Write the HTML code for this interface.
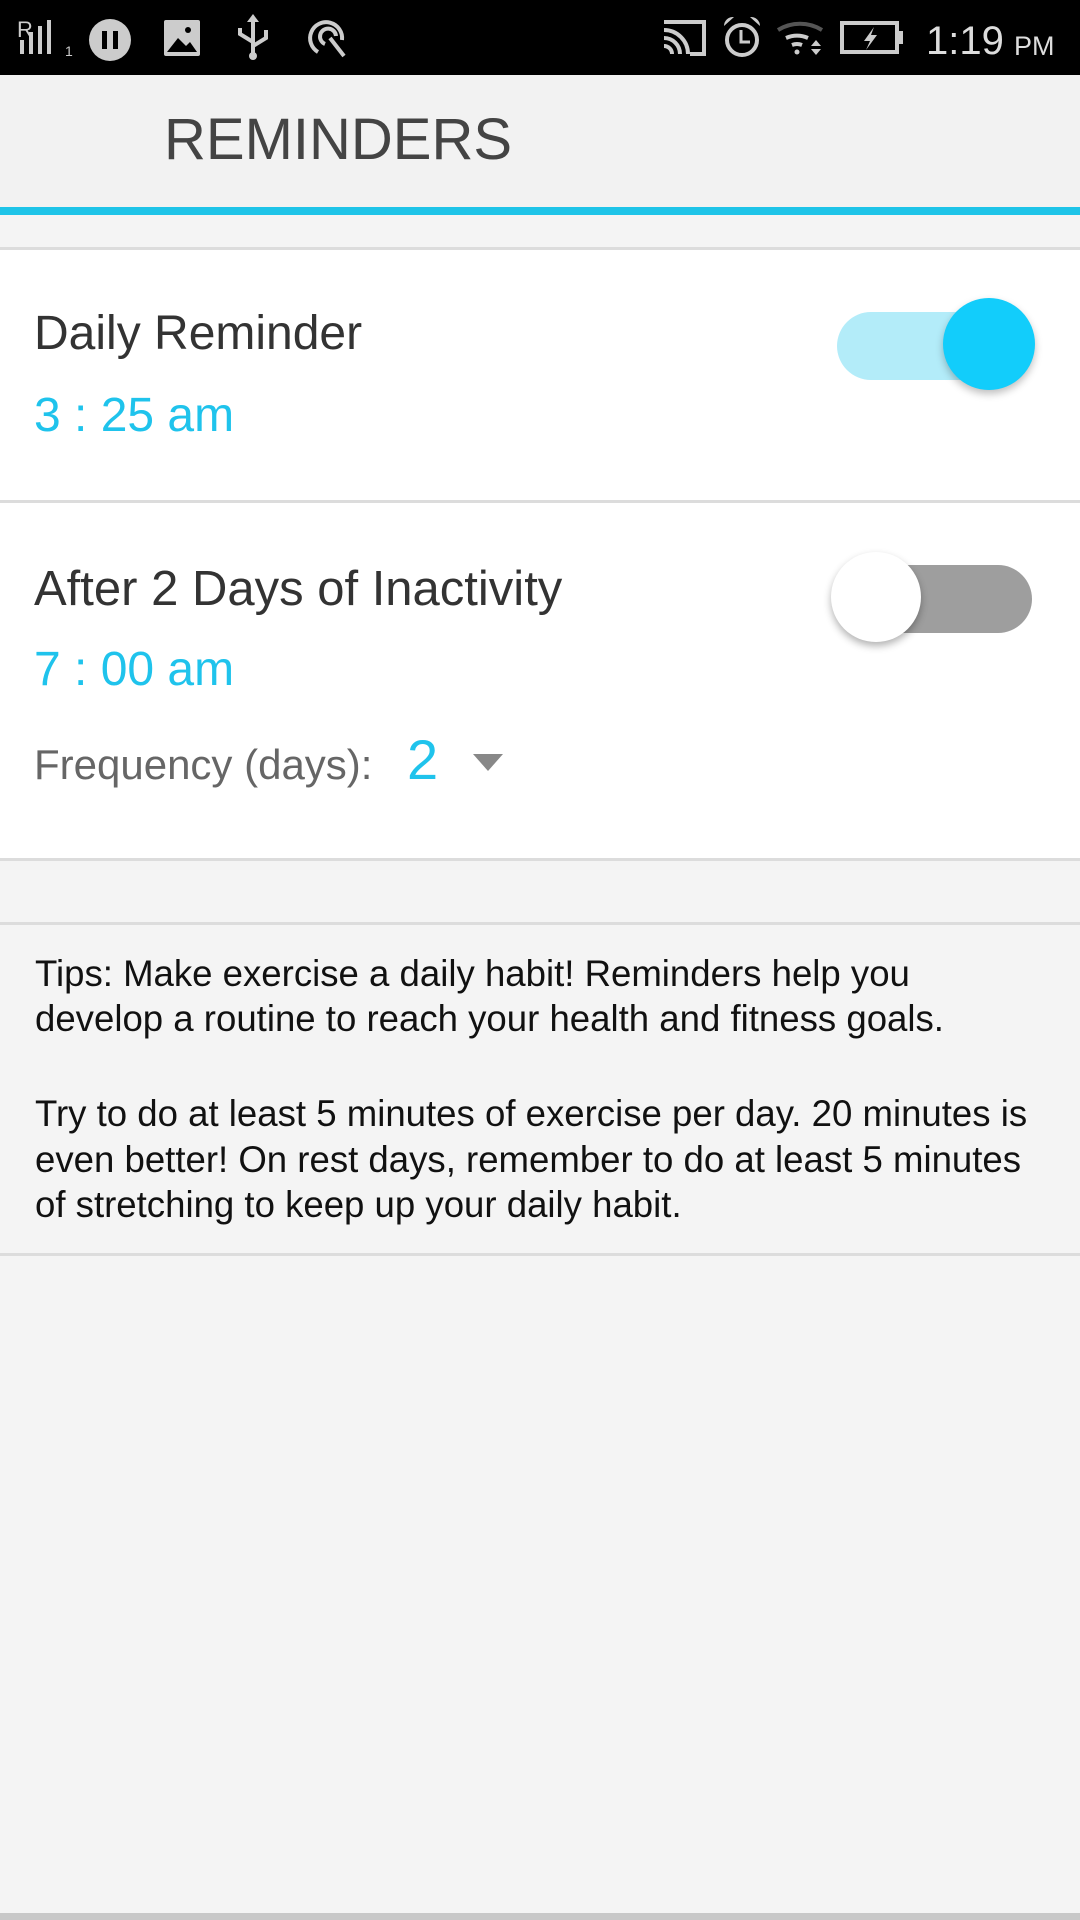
<!DOCTYPE html>
<html><head><meta charset="utf-8"><style>
*{margin:0;padding:0;box-sizing:border-box}
body{width:1080px;height:1920px;background:#f4f4f4;font-family:"Liberation Sans",sans-serif;position:relative;overflow:hidden}
.a{position:absolute;white-space:nowrap;line-height:1}
.sb{position:absolute;left:0;top:0;width:1080px;height:75px;background:#000}
.hr{position:absolute;left:0;width:1080px;height:3px;background:#dcdcdc}
.card{position:absolute;left:0;width:1080px;background:#fff}
.blue{color:#1fc3ec}
.tip{position:absolute;left:35px;font-size:36.6px;color:#111;white-space:nowrap;line-height:1}
</style></head><body>
<div class="sb">
<svg width="1080" height="75" style="position:absolute;left:0;top:0" fill="#ccc" stroke="#ccc">
 <text x="17" y="37" font-size="22" fill="#ccc" stroke="none" font-family="Liberation Sans">R</text>
 <rect x="20" y="40" width="4" height="14" stroke="none"/><rect x="29" y="32" width="4" height="22" stroke="none"/><rect x="38" y="26" width="4" height="28" stroke="none"/><rect x="47" y="20" width="4" height="34" stroke="none"/>
 <text x="65" y="56" font-size="14" fill="#ccc" stroke="none">1</text>
 <circle cx="110" cy="40" r="21" stroke="none"/><rect x="102" y="31" width="5" height="18" fill="#000" stroke="none"/><rect x="113" y="31" width="5" height="18" fill="#000" stroke="none"/>
 <rect x="164" y="20" width="36" height="36" rx="2" stroke="none"/><path d="M167 52 L178 38 L186 46 L190 42 L197 52Z" fill="#000" stroke="none"/><circle cx="188" cy="30" r="3" fill="#000" stroke="none"/>
 <path d="M253 18 V56 M253 42 L240 34 V28 M253 46 L266 38 V30" fill="none" stroke-width="4"/><circle cx="253" cy="56" r="4" stroke="none"/><path d="M247 22 L253 14 L259 22Z" stroke="none"/>
 <path d="M318 52 A16 16 0 1 1 342 40" fill="none" stroke-width="4"/><path d="M325 44 A8 8 0 1 1 336 36" fill="none" stroke-width="4"/><path d="M330 38 L344 56" stroke-width="4"/>
 <path d="M664 22 H704 V54 H690" fill="none" stroke-width="4"/><path d="M664 30 A24 24 0 0 1 688 54 M664 38 A16 16 0 0 1 680 54 M664 46 A8 8 0 0 1 672 54" fill="none" stroke-width="4"/>
 <circle cx="742" cy="40" r="15" fill="none" stroke-width="4"/><path d="M741 30 V42 H750" fill="none" stroke-width="3"/><path d="M724 26 A9 9 0 0 1 734 17 Z M760 26 A9 9 0 0 0 750 17Z" stroke="none"/>
 <path d="M778 30 A42 42 0 0 1 822 30" fill="none" stroke="#555" stroke-width="4"/><path d="M786 38 A28 28 0 0 1 808 38 M792 45 A14 14 0 0 1 802 45" fill="none" stroke-width="4"/><circle cx="797" cy="52" r="2.5" stroke="none"/><path d="M811 46 L816 40 L821 46Z M811 49 H821 L816 55Z" stroke="none"/>
 <rect x="842" y="23" width="55" height="29" fill="none" stroke-width="4"/><rect x="899" y="31" width="4" height="13" stroke="none"/><path d="M874 27 L864 41 H870 L866 50 L877 35 H871Z" stroke="none"/>
</svg>
<div class="a" style="left:926px;top:21px;font-size:40px;color:#ddd">1:19</div>
<div class="a" style="left:1014px;top:33px;font-size:27px;color:#ddd">PM</div>
</div>
<div style="position:absolute;left:0;top:75px;width:1080px;height:133px;background:#f2f2f2"></div>
<div class="a" style="left:164px;top:111px;font-size:58px;color:#444;letter-spacing:0px">REMINDERS</div>
<div style="position:absolute;left:0;top:207px;width:1080px;height:8px;background:#1ec4e8"></div>
<div class="hr" style="top:247px"></div>
<div class="card" style="top:250px;height:251px"></div>
<div class="hr" style="top:500px"></div>
<div class="card" style="top:503px;height:356px"></div>
<div class="hr" style="top:858px"></div>
<div class="hr" style="top:922px"></div>
<div class="hr" style="top:1253px"></div>
<div class="hr" style="top:1913px;height:7px;background:#c8c8c8"></div>

<div class="a" style="left:34px;top:310px;font-size:48px;color:#333">Daily Reminder</div>
<div class="a blue" style="left:34px;top:392px;font-size:48px">3 : 25 am</div>
<div style="position:absolute;left:837px;top:312px;width:190px;height:68px;border-radius:34px;background:#b3ecf9"></div>
<div style="position:absolute;left:943px;top:298px;width:92px;height:92px;border-radius:50%;background:#12cdfb;box-shadow:0 4px 8px rgba(0,0,0,.25)"></div>

<div class="a" style="left:34px;top:565px;font-size:49px;color:#333">After 2 Days of Inactivity</div>
<div class="a blue" style="left:34px;top:646px;font-size:48px">7 : 00 am</div>
<div style="position:absolute;left:870px;top:565px;width:162px;height:68px;border-radius:34px;background:#9e9e9e"></div>
<div style="position:absolute;left:831px;top:552px;width:90px;height:90px;border-radius:50%;background:#fff;box-shadow:0 4px 8px rgba(0,0,0,.3)"></div>

<div class="a" style="left:34px;top:744px;font-size:42px;color:#666">Frequency (days):</div>
<div class="a blue" style="left:407px;top:732px;font-size:56px">2</div>
<div style="position:absolute;left:473px;top:754px;width:0;height:0;border-left:15px solid transparent;border-right:15px solid transparent;border-top:17px solid #888"></div>

<div class="tip" style="top:956px">Tips: Make exercise a daily habit! Reminders help you</div>
<div class="tip" style="top:1001px">develop a routine to reach your health and fitness goals.</div>
<div class="tip" style="top:1096px">Try to do at least 5 minutes of exercise per day. 20 minutes is</div>
<div class="tip" style="top:1142px">even better! On rest days, remember to do at least 5 minutes</div>
<div class="tip" style="top:1187px">of stretching to keep up your daily habit.</div>
</body></html>
